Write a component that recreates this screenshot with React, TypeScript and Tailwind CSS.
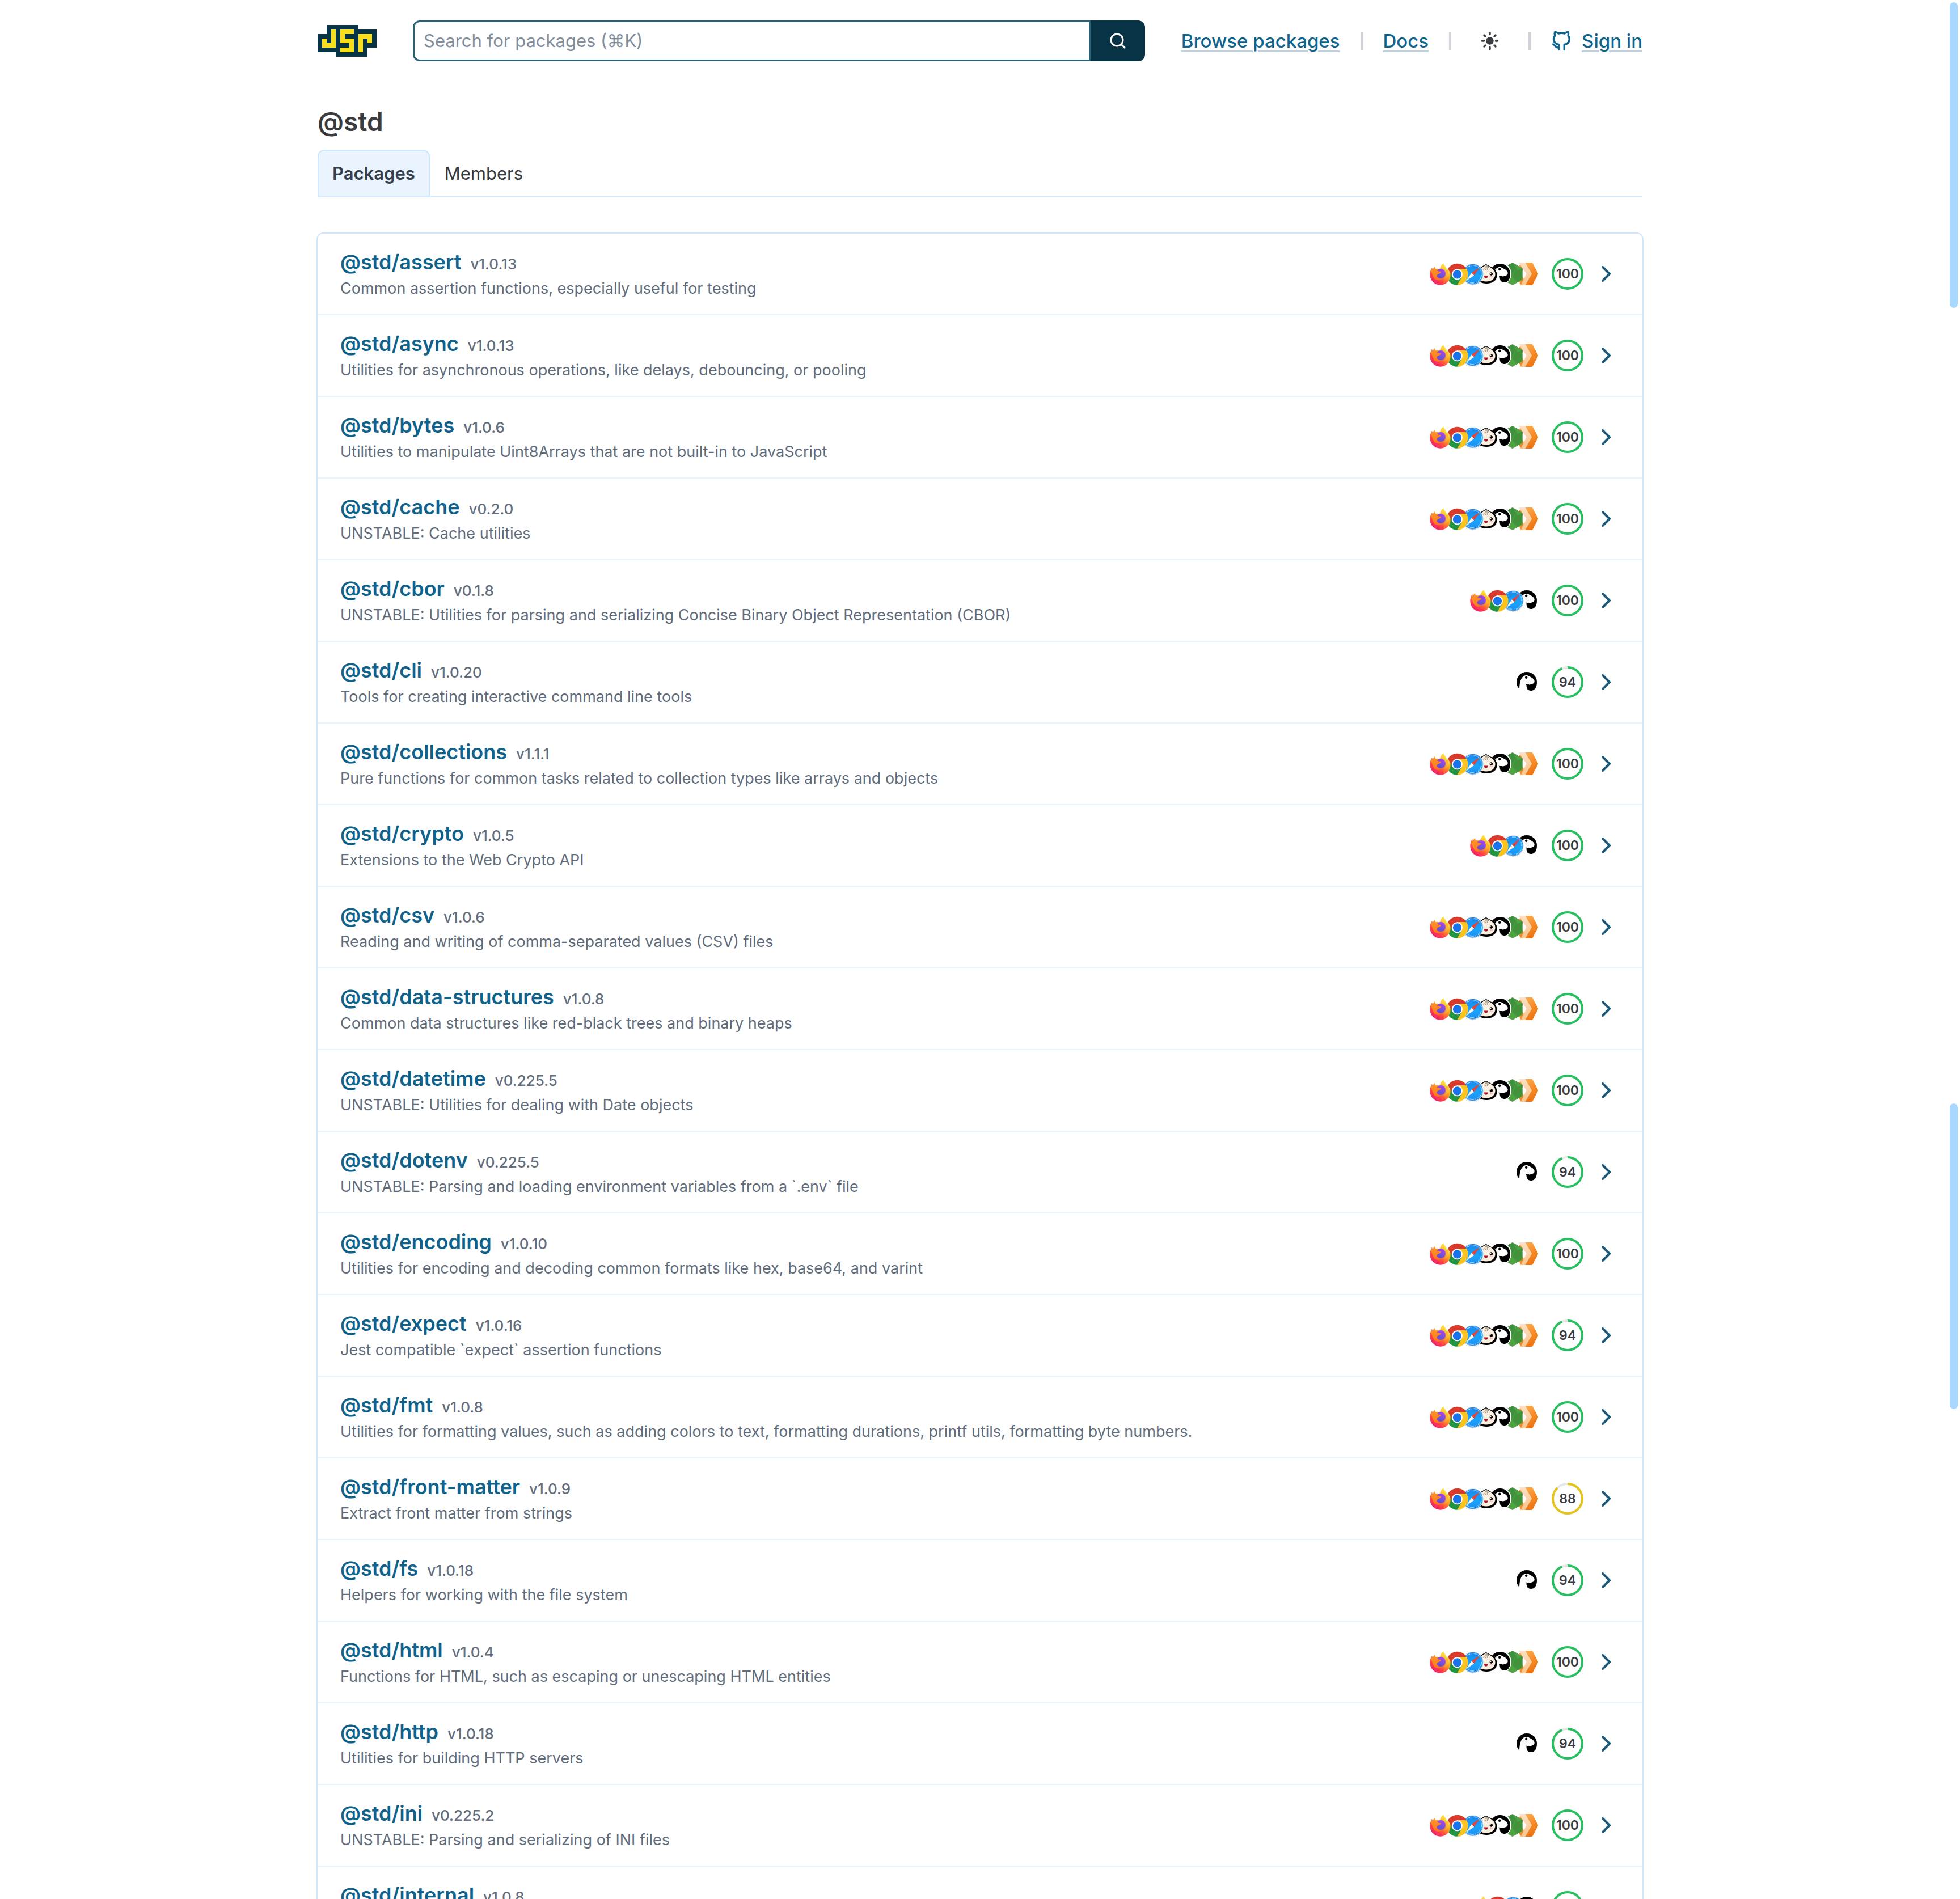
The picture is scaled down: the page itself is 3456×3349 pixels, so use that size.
type Runtime = "firefox" | "chrome" | "safari" | "bun" | "deno" | "node" | "workers";

interface Pkg {
  name: string;
  version: string;
  description: string;
  runtimes: Runtime[];
  score: number;
}

const ALL: Runtime[] = ["firefox", "chrome", "safari", "bun", "deno", "node", "workers"];
const WEB: Runtime[] = ["firefox", "chrome", "safari", "deno"];
const DENO: Runtime[] = ["deno"];

const PACKAGES: Pkg[] = [
  { name: "@std/assert", version: "v1.0.13", description: "Common assertion functions, especially useful for testing", runtimes: ALL, score: 100 },
  { name: "@std/async", version: "v1.0.13", description: "Utilities for asynchronous operations, like delays, debouncing, or pooling", runtimes: ALL, score: 100 },
  { name: "@std/bytes", version: "v1.0.6", description: "Utilities to manipulate Uint8Arrays that are not built-in to JavaScript", runtimes: ALL, score: 100 },
  { name: "@std/cache", version: "v0.2.0", description: "UNSTABLE: Cache utilities", runtimes: ALL, score: 100 },
  { name: "@std/cbor", version: "v0.1.8", description: "UNSTABLE: Utilities for parsing and serializing Concise Binary Object Representation (CBOR)", runtimes: WEB, score: 100 },
  { name: "@std/cli", version: "v1.0.20", description: "Tools for creating interactive command line tools", runtimes: DENO, score: 94 },
  { name: "@std/collections", version: "v1.1.1", description: "Pure functions for common tasks related to collection types like arrays and objects", runtimes: ALL, score: 100 },
  { name: "@std/crypto", version: "v1.0.5", description: "Extensions to the Web Crypto API", runtimes: WEB, score: 100 },
  { name: "@std/csv", version: "v1.0.6", description: "Reading and writing of comma-separated values (CSV) files", runtimes: ALL, score: 100 },
  { name: "@std/data-structures", version: "v1.0.8", description: "Common data structures like red-black trees and binary heaps", runtimes: ALL, score: 100 },
  { name: "@std/datetime", version: "v0.225.5", description: "UNSTABLE: Utilities for dealing with Date objects", runtimes: ALL, score: 100 },
  { name: "@std/dotenv", version: "v0.225.5", description: "UNSTABLE: Parsing and loading environment variables from a `.env` file", runtimes: DENO, score: 94 },
  { name: "@std/encoding", version: "v1.0.10", description: "Utilities for encoding and decoding common formats like hex, base64, and varint", runtimes: ALL, score: 100 },
  { name: "@std/expect", version: "v1.0.16", description: "Jest compatible `expect` assertion functions", runtimes: ALL, score: 94 },
  { name: "@std/fmt", version: "v1.0.8", description: "Utilities for formatting values, such as adding colors to text, formatting durations, printf utils, formatting byte numbers.", runtimes: ALL, score: 100 },
  { name: "@std/front-matter", version: "v1.0.9", description: "Extract front matter from strings", runtimes: ALL, score: 88 },
  { name: "@std/fs", version: "v1.0.18", description: "Helpers for working with the file system", runtimes: DENO, score: 94 },
  { name: "@std/html", version: "v1.0.4", description: "Functions for HTML, such as escaping or unescaping HTML entities", runtimes: ALL, score: 100 },
  { name: "@std/http", version: "v1.0.18", description: "Utilities for building HTTP servers", runtimes: DENO, score: 94 },
  { name: "@std/ini", version: "v0.225.2", description: "UNSTABLE: Parsing and serializing of INI files", runtimes: ALL, score: 100 },
  { name: "@std/internal", version: "v1.0.8", description: "", runtimes: WEB, score: 100 },
];

const RUNTIME_STYLE: Record<Runtime, { className: string; viewBox: string }> = {
  firefox: { className: "z-[7] w-10", viewBox: "0 0 40 40" },
  chrome: { className: "z-[6] w-10 -ml-3", viewBox: "0 0 40 40" },
  safari: { className: "z-[5] w-10 -ml-3", viewBox: "0 0 40 40" },
  bun: { className: "z-[4] w-10 -ml-4", viewBox: "0 0 40 40" },
  deno: { className: "z-[3] w-10 -ml-4", viewBox: "0 0 40 40" },
  node: { className: "z-[2] w-9 -ml-4", viewBox: "0 0 36 40" },
  workers: { className: "z-[1] w-10 -ml-[13px]", viewBox: "0 0 40 40" },
};

function IconSprite() {
  return (
    <svg className="absolute size-0" aria-hidden="true">
      <defs>
        <linearGradient id="ff-body" x1="0.85" y1="0.05" x2="0.2" y2="0.95">
          <stop offset="0" stopColor="#fff14a" />
          <stop offset="0.25" stopColor="#ffcb35" />
          <stop offset="0.5" stopColor="#ff8a2c" />
          <stop offset="0.75" stopColor="#ff4048" />
          <stop offset="1" stopColor="#ee1a6e" />
        </linearGradient>
        <linearGradient id="ff-head" x1="0" y1="0" x2="1" y2="1">
          <stop offset="0" stopColor="#ff9a1e" />
          <stop offset="1" stopColor="#ff6b2c" />
        </linearGradient>
        <linearGradient id="ff-globe" x1="0.8" y1="0" x2="0.2" y2="1">
          <stop offset="0" stopColor="#b13df0" />
          <stop offset="0.5" stopColor="#7a4fe0" />
          <stop offset="1" stopColor="#5552c8" />
        </linearGradient>
        <linearGradient id="safari-dial" x1="0" y1="0" x2="0" y2="1">
          <stop offset="0" stopColor="#1a86ee" />
          <stop offset="0.6" stopColor="#18a4fa" />
          <stop offset="1" stopColor="#1f8df2" />
        </linearGradient>
        <linearGradient id="node-body" x1="0.2" y1="0" x2="0.8" y2="1">
          <stop offset="0" stopColor="#3b8a3c" />
          <stop offset="1" stopColor="#4aa13f" />
        </linearGradient>
        <linearGradient id="wk-right" x1="0" y1="0" x2="0.4" y2="1">
          <stop offset="0" stopColor="#fbb04c" />
          <stop offset="1" stopColor="#ef7310" />
        </linearGradient>
        <linearGradient id="wk-mid" x1="0" y1="0" x2="0.2" y2="1">
          <stop offset="0" stopColor="#fde3c8" />
          <stop offset="1" stopColor="#f9c592" />
        </linearGradient>
      </defs>
      <symbol id="rt-firefox" viewBox="0 0 40 40">
        <path
          fill="url(#ff-body)"
          d="M.3 21c0-5 1.5-9 3.8-12.500l.9 3.700C6 10 7.600 8.200 9.300 7c-.2 1.600.2 3 1 4.200 2.500-.6 5-.6 7.200.3C18.500 8 21 4 24 1c1 3.500 4.500 5.500 5.500 10 .4 1 .9 1.800 1.700 2.500l.3-2.500c3.500 3.500 5.200 8 5 12-.4 9.500-8 16.700-17.700 16.700C8.400 39.700.3 31.300.3 21Z"
        />
        <circle cx="19.500" cy="19.500" r="8.500" fill="url(#ff-globe)" />
        <path fill="url(#ff-head)" d="M3 14c3-2.500 8-2.300 11 1 2 1 4.500.8 6.200 1.500 0 1.700-2 2.500-4.200 3.500-3 1-4 3-3.500 5 2 3.500 6 4.500 9 3-3 3.500-9 4-13 .5C5.500 25 3.500 19 3 14Z" />
        <path fill="#ffb52e" d="M22 11.500c5 1.500 8.500 5.500 7.500 11.500-.5 3-2 5-4.500 6.500 7-1 9-8 6.500-14-2.500-2.500-5.500-4-9.500-4Z" opacity="0.8" />
      </symbol>
      <symbol id="rt-chrome" viewBox="0 0 40 40">
        <g transform="translate(20.500 20.800)">
          <path fill="#d93a2b" d="M-16.450-9.500A19 19 0 0 1 16.450-9.500H0L-8.230 4.750Z" />
          <path fill="#fcc31c" transform="rotate(120)" d="M-16.450-9.500A19 19 0 0 1 16.450-9.500H0L-8.230 4.750Z" />
          <path fill="#22943f" transform="rotate(240)" d="M-16.450-9.500A19 19 0 0 1 16.450-9.500H0L-8.230 4.750Z" />
          <circle r="9.500" fill="#fff" />
          <circle r="7.600" fill="#1a73e8" />
        </g>
      </symbol>
      <symbol id="rt-safari" viewBox="0 0 40 40">
        <circle cx="20" cy="21.200" r="18.300" fill="#b9bec6" />
        <circle cx="20" cy="20.500" r="18.300" fill="#cfd8e2" />
        <circle cx="20" cy="20.500" r="17.600" fill="url(#safari-dial)" />
        <circle cx="20" cy="20.500" r="15.400" fill="none" stroke="#d8efff" strokeWidth="2" strokeDasharray="0.7 1.300" />
        <path fill="#e2453b" d="M32.500 8 17.800 18.300l4.400 4.400Z" />
        <path fill="#f4f4f4" d="M7.500 33 17.800 18.300l4.400 4.400Z" />
      </symbol>
      <symbol id="rt-bun" viewBox="0 0 40 40">
        <path d="M1.500 22C1.500 12 12 7 19.500 2.800 25 7 38.700 10.500 38.700 22 38.700 32 30 37 20.500 37 9 37 1.500 31 1.500 22Z" />
        <path fill="#fbf0df" d="M3.500 20.500C3.500 13 12 8.500 19.500 4.300 25 8 35.500 11 35.500 20.500c0 8.500-7.500 13-16 13s-16-4.500-16-13Z" />
        <path fill="none" stroke="#8b8177" strokeWidth="0.900" d="M19.500 5c-.5 3-2.500 5.500-5 7.500M20 5c.2 3-.6 5.500-1.800 8M20.500 5.500c1 2.500 1 5 .7 7.500M21.500 6c2 2 3.200 4 3.500 6.500" />
        <circle cx="10.500" cy="20.500" r="2.600" />
        <circle cx="28.300" cy="20" r="2.700" />
        <circle cx="27.500" cy="19.200" r="0.900" fill="#fff" />
        <ellipse cx="28.500" cy="24.800" rx="2.800" ry="1.500" fill="#fdb9c5" />
        <path fill="#a51631" d="M15.500 23.500h7.500c-.4 2.500-1.800 4.200-3.700 4.200s-3.300-1.700-3.800-4.200Z" />
      </symbol>
      <symbol id="rt-deno" viewBox="0 0 40 40">
        <circle cx="20" cy="20" r="20" fill="#fff" />
        <path d="M7 32C4 29 2 25 2 20a18 18 0 0 1 36 0c0 8-3 15-10.500 15-5.500 0-8.200-3.500-8-10.500 3 .2 14.200.2 14.200-5.800 0-4-4.700-6.700-8.700-8.700-3-2-6-2.400-8.500-1.500C11 10.500 7.500 17 7 32Z" />
        <path d="M18 23c1.500 1.300 4 1.500 6 .8l-.3 1.200c-2 .4-4 .4-5.200-.5Z" />
        <circle cx="19.200" cy="11.700" r="2.200" />
      </symbol>
      <symbol id="rt-node" viewBox="0 0 36 40">
        <path fill="url(#node-body)" d="M17.800 0 35.500 10v20L17.800 40 .3 30V10Z" />
        <path fill="#5fae4d" d="m17.800 0 17.700 10-8.500 4.500L17.800 0Z" opacity="0.5" />
        <path fill="#3d8f3a" d="M27 14.500 35.500 10v20l-9 5-9-10Z" opacity="0.6" />
        <path fill="#5cab48" d="m17.500 25 9 10-8.700 5L.3 30Z" opacity="0.5" />
      </symbol>
      <symbol id="rt-workers" viewBox="0 0 40 40">
        <path fill="url(#wk-right)" d="M13 0h15.500c1 0 1.700.5 2.200 1.400l8.900 17.200c.5 1 .5 1.800 0 2.800l-8.900 17.200c-.5.900-1.200 1.400-2.200 1.400H16l12-20Z" />
        <path fill="#f08c2e" d="M8.500 3 .5 18.500c-.4 1-.4 2 0 3L9 38.500c.5 1 1.500 1.500 2.500 1.500L15 29.500 10.500 20 13.500 12Z" />
        <path fill="url(#wk-mid)" d="M6 0h11.500L29 20 17.500 40H9.500L19.500 20Z" />
      </symbol>
    </svg>
  );
}

function RuntimeIcons({ runtimes }: { runtimes: Runtime[] }) {
  return (
    <span className="isolate flex items-center">
      {runtimes.map((r) => (
        <svg key={r} role="img" aria-label={r} viewBox={RUNTIME_STYLE[r].viewBox} className={`relative h-10 ${RUNTIME_STYLE[r].className}`}>
          <use href={`#rt-${r}`} />
        </svg>
      ))}
    </span>
  );
}

function ScoreRing({ score }: { score: number }) {
  return (
    <span className="relative flex size-14 items-center justify-center">
      <svg viewBox="0 0 56 56" className="absolute inset-0 size-14 -rotate-90" aria-hidden="true">
        <circle cx="28" cy="28" r="26" fill="none" strokeWidth="4" className="stroke-[#e7e8ea]" />
        <circle
          cx="28"
          cy="28"
          r="26"
          fill="none"
          strokeWidth="4"
          pathLength="100"
          strokeDasharray={`${score} ${100 - score}`}
          className={score >= 90 ? "stroke-[#27c060]" : "stroke-[#e6c319]"}
        />
      </svg>
      <span className="text-[23px] leading-8 font-semibold text-[#3a3d42]">{score}</span>
    </span>
  );
}

function PackageRow({ pkg }: { pkg: Pkg }) {
  return (
    <li className="border-b-2 border-[#e5f3fe] last:border-b-0">
      <a href={`#${pkg.name}`} className="flex items-center justify-between py-6 pr-14 pl-10">
        <span className="flex flex-col">
          <span className="flex items-baseline gap-4 leading-[52px]">
            <span className="text-4xl leading-[52px] font-semibold text-[#0f628c]">{pkg.name}</span>
            <span className="text-[26px] leading-8 font-medium text-[#626e7d]">{pkg.version}</span>
          </span>
          <span className="min-h-[42px] text-[27px] leading-[42px] text-[#606c7b]">{pkg.description}</span>
        </span>
        <span className="flex items-center">
          <RuntimeIcons runtimes={pkg.runtimes} />
          <span className="mr-8 ml-6">
            <ScoreRing score={pkg.score} />
          </span>
          <svg viewBox="0 0 16 28" className="h-7 w-4" fill="none" stroke="#1a5a78" strokeWidth="4" strokeLinecap="round" strokeLinejoin="round" aria-hidden="true">
            <path d="M2 2 14 14 2 26" />
          </svg>
        </span>
      </a>
    </li>
  );
}

function Divider() {
  return <span className="h-8 w-1 bg-[#d1d3d9]" aria-hidden="true" />;
}

const NAV_LINK = "underline decoration-[#bfd1de] decoration-[3px] underline-offset-[5px]";

function Header() {
  return (
    <header className="flex h-[72px] items-center gap-16">
      <a href="#home" aria-label="JSR home">
        <svg viewBox="0 0 13 7" className="h-14 w-[104px]" shapeRendering="crispEdges" aria-hidden="true">
          <path fill="#083344" d="M0 2h2V0h7v1h4v4h-2v2H4V6H0Z" />
          <path fill="#f7df1e" d="M1 3h1v1h1V1h1v4H1ZM5 1h3v1H6v1h2v3H5V5h2V4H5ZM9 2h3v2h-1V3h-1v3H9Z" />
        </svg>
      </a>
      <form className="flex h-full flex-1" onSubmit={(e) => e.preventDefault()}>
        <input
          type="search"
          aria-label="Search for packages"
          placeholder="Search for packages (⌘K)"
          className="min-w-0 flex-1 rounded-l-xl border-[3px] border-[#2c5f73] bg-white px-4 text-[31px] text-[#3a3d42] outline-none placeholder:text-[#818d9b]"
        />
        <button type="submit" aria-label="Search" className="flex w-24 items-center justify-center rounded-r-xl bg-[#083344]">
          <svg viewBox="0 0 28 28" className="size-7" fill="none" stroke="#fff" strokeWidth="3" strokeLinecap="round" aria-hidden="true">
            <circle cx="12.500" cy="12.500" r="10.500" />
            <path d="m20 20 6 6" />
          </svg>
        </button>
      </form>
      <nav className="flex items-center gap-9 text-[33px] leading-10 font-medium text-[#0f648f]">
        <a href="#packages" className={NAV_LINK}>Browse packages</a>
        <Divider />
        <a href="#docs" className={NAV_LINK}>Docs</a>
        <Divider />
        <button type="button" aria-label="Toggle theme" className="flex size-16 items-center justify-center">
          <svg viewBox="-18 -18 36 36" className="size-9" stroke="#3a3d42" strokeWidth="3.500" strokeLinecap="round" aria-hidden="true">
            <circle r="6.700" fill="#3a3d42" stroke="none" />
            <path d="M0-14.500v3M0 11.500v3M-13.500 0h3M10.500 0h3M-10-10l2 2M8 8l2 2M-10 10l2-2M8-8l2-2" />
          </svg>
        </button>
        <Divider />
        <a href="#login" className="flex items-center gap-[18px]">
          <svg viewBox="0 0 36 36" className="size-9" fill="none" stroke="currentColor" strokeWidth="3.500" strokeLinecap="round" strokeLinejoin="round" aria-hidden="true">
            <path d="M13.700 33.500v-9C8.500 24 4.500 20.500 4.500 14.500c0-2.300.8-4 2.200-5.500-.8-2.500-.8-4.500 0-6.500 2.500-.2 4.800 1.300 6.500 2.500 3.500-.9 6.800-.9 10.300 0 1.700-1.200 4-2.700 6.500-2.500.8 2 .8 4 0 6.500 1.500 1.500 2.300 3.200 2.300 5.500 0 6-3.800 9.500-9 10v9" />
            <path d="M13.700 29.700C7.500 30.700 8 26 3.500 24" />
          </svg>
          <span className={NAV_LINK}>Sign in</span>
        </a>
      </nav>
    </header>
  );
}

export default function App() {
  return (
    <div className="relative h-screen overflow-hidden bg-white px-10 pt-9 font-['Inter',sans-serif]">
      <IconSprite />
      <div className="mx-auto max-w-[2336px]">
        <Header />
        <main>
          <h1 className="mt-[78px] text-[46px] leading-[56px] font-semibold text-[#3a3b3f]">@std</h1>
          <nav className="mt-[22px] flex border-b-2 border-[#d6ecfe] text-[31px] leading-10 text-[#36393e]">
            <a href="#packages" aria-current="page" className="rounded-t-xl border-2 border-b-0 border-[#cbe6fb] bg-[#eaf4ff] px-6 py-5 font-semibold text-[#37414d]">
              Packages
            </a>
            <a href="#members" className="border-2 border-b-0 border-transparent px-6 py-5">
              Members
            </a>
          </nav>
          <ul className="-mx-0.5 mt-[62px] rounded-xl border-2 border-[#cfe8ff]">
            {PACKAGES.map((pkg) => (
              <PackageRow key={pkg.name} pkg={pkg} />
            ))}
          </ul>
        </main>
      </div>
      <div className="absolute top-1 right-1 h-[539px] w-3.5 rounded-full bg-[#a8d8ff]" />
      <div className="absolute top-[1946px] right-1 h-[539px] w-3.5 rounded-full bg-[#a8d8ff]" />
    </div>
  );
}
